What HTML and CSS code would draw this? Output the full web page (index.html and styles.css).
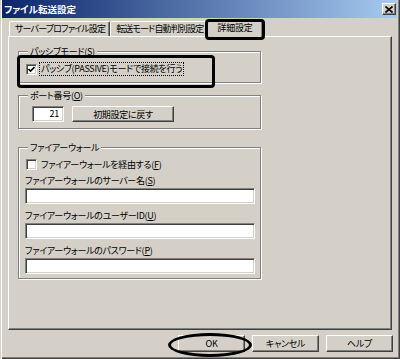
FILE: index.html
```html
<!DOCTYPE html>
<html lang="ja">
<head>
    <meta charset="UTF-8">
    <title>ファイル転送設定</title>
    <link rel="stylesheet" href="styles.css">
</head>
<body>
    <div class="window">
        <div class="titlebar">
            <span class="title">ファイル転送設定</span>
            <span class="close">
                <svg width="8" height="7" viewBox="0 0 8 7"><path d="M0.5 0.5 L7.5 6.5 M7.5 0.5 L0.5 6.5" stroke="#000" stroke-width="1.6"/></svg>
            </span>
        </div>

        <div class="tabs">
            <div class="tab">サーバープロファイル設定</div>
            <div class="tab">転送モード自動判別設定</div>
            <div class="tab active">詳細設定</div>
        </div>

        <div class="panel">
            <fieldset class="group group-passive">
                <legend>パッシブモード(<u>S</u>)</legend>
                <label class="check">
                    <span class="box checked">
                        <svg width="7" height="7" viewBox="0 0 7 7"><path d="M0.5 3 L2.5 5 L6.5 1" fill="none" stroke="#000" stroke-width="1.6"/></svg>
                    </span>
                    <span class="focus">パッシブ(PASSIVE)モードで接続を行う</span>
                </label>
            </fieldset>

            <fieldset class="group group-port">
                <legend>ポート番号(<u>O</u>)</legend>
                <div class="port-row">
                    <div class="input port">21</div>
                    <div class="btn reset">初期設定に戻す</div>
                </div>
            </fieldset>

            <fieldset class="group group-fw">
                <legend>ファイアーウォール</legend>
                <label class="check fw-check">
                    <span class="box"></span>
                    <span>ファイアーウォールを経由する(<u>F</u>)</span>
                </label>
                <div class="field">
                    <div class="field-label">ファイアーウォールのサーバー名(<u>S</u>)</div>
                    <div class="input wide"></div>
                </div>
                <div class="field">
                    <div class="field-label">ファイアーウォールのユーザーID(<u>U</u>)</div>
                    <div class="input wide"></div>
                </div>
                <div class="field">
                    <div class="field-label">ファイアーウォールのパスワード(<u>P</u>)</div>
                    <div class="input wide"></div>
                </div>
            </fieldset>
        </div>

        <div class="footer">
            <div class="btn footer-btn ok">OK</div>
            <div class="btn footer-btn">キャンセル</div>
            <div class="btn footer-btn">ヘルプ</div>
        </div>
    </div>
</body>
</html>
```

FILE: styles.css
```css
* {
    box-sizing: border-box;
}
body {
    margin: 0;
    background: #d4d0c8;
    font-family: "Noto Sans CJK JP", "Noto Sans", sans-serif;
    font-size: 9px;
    letter-spacing: -0.3px;
    color: #000;
    font-feature-settings: "palt";
}
u {
    text-underline-offset: 1px;
}
.window {
    width: 400px;
    height: 359px;
    padding: 0 3px 3px 2px;
    display: flex;
    flex-direction: column;
    background: #d4d0c8;
    box-shadow: inset 1px 0 #d4d0c8, inset 2px 0 #fff, inset -1px -1px #404040, inset -2px -2px #808080;
}
.titlebar {
    height: 18px;
    flex: none;
    display: flex;
    align-items: center;
    justify-content: space-between;
    padding: 0 1px 0 2px;
    background: linear-gradient(to right, #0a246a, #a6caf0);
}
.title {
    color: #fff;
    font-weight: bold;
    font-size: 9.5px;
    letter-spacing: 0;
}
.close {
    width: 14px;
    height: 12px;
    display: flex;
    align-items: center;
    justify-content: center;
    background: #d4d0c8;
    border: 1px solid;
    border-color: #fff #404040 #404040 #fff;
    box-shadow: inset -1px -1px #808080;
}
.tabs {
    height: 17px;
    margin-top: 1px;
    padding-left: 7px;
    display: flex;
    align-items: flex-start;
    flex: none;
}
.tab {
    height: 15px;
    margin-top: 2px;
    padding: 0 4px 0 5px;
    line-height: 14px;
    letter-spacing: -0.85px;
    white-space: nowrap;
    border: 1px solid;
    border-bottom: none;
    border-color: #fff #404040 transparent #fff;
    border-radius: 2px 2px 0 0;
    box-shadow: inset -1px 0 #808080;
    background: #d4d0c8;
}
.tab.active {
    position: relative;
    z-index: 1;
    height: 18px;
    margin: 0 0 0 -2px;
    padding: 0 9px 0 10px;
    line-height: 16px;
    letter-spacing: -0.2px;
}
.tab.active::after {
    content: "";
    position: absolute;
    left: -2px;
    top: -1px;
    right: -3px;
    bottom: -3px;
    border: 3px solid #000;
    border-radius: 4px;
}
.panel {
    flex: 1;
    margin: 0 5px 0 6px;
    padding: 9px 0 0 9px;
    border: 1px solid;
    border-color: #fff #404040 #404040 #fff;
    box-shadow: inset -1px -1px #808080;
}
.group {
    position: relative;
    width: 243px;
    margin: 0;
    padding: 5px 5px 6px 6px;
    border: 1px solid #808080;
    box-shadow: inset 1px 1px #fff, 1px 1px #fff;
    min-width: 0;
}
.group legend {
    padding: 0 2px;
    margin-left: 3px;
    line-height: 11px;
    background: #d4d0c8;
}
.group-port {
    margin-top: 7px;
}
.group-fw {
    margin-top: 13px;
    padding-bottom: 4px;
}
.group-passive::after {
    content: "";
    position: absolute;
    left: -2px;
    top: -2px;
    width: 192px;
    height: 27px;
    border: 3px solid #000;
    border-radius: 4px;
}
.check {
    display: flex;
    align-items: center;
    gap: 2px;
    height: 14px;
    padding-left: 1px;
}
.fw-check {
    height: 13px;
    gap: 4px;
}
.box {
    width: 11px;
    height: 11px;
    display: flex;
    align-items: center;
    justify-content: center;
    background: #fff;
    border: 1px solid;
    border-color: #808080 #fff #fff #808080;
    box-shadow: inset 1px 1px #404040, inset -1px -1px #d4d0c8;
}
.focus {
    padding: 1px 2px;
    outline: 1px dotted #000;
    outline-offset: -1px;
    line-height: 12px;
}
.port-row {
    display: flex;
    gap: 8px;
    padding-left: 7px;
}
.input {
    height: 16px;
    background: #fff;
    border: 1px solid;
    border-color: #808080 #fff #fff #808080;
    box-shadow: inset 1px 1px #404040, inset -1px -1px #d4d0c8;
}
.port {
    width: 32px;
    padding-right: 4px;
    text-align: right;
    line-height: 14px;
}
.btn {
    display: flex;
    align-items: center;
    justify-content: center;
    background: #d4d0c8;
    border: 1px solid;
    border-color: #fff #404040 #404040 #fff;
    box-shadow: inset -1px -1px #808080;
}
.reset {
    width: 102px;
    height: 16px;
}
.fw-check + .field {
    margin-top: 4px;
}
.field + .field {
    margin-top: 6px;
}
.field-label {
    height: 12px;
    line-height: 12px;
    margin-bottom: 1px;
}
.wide {
    width: 230px;
}
.footer {
    height: 26px;
    flex: none;
    display: flex;
    justify-content: flex-end;
    gap: 7px;
    padding: 5px 4px 0 0;
}
.footer-btn {
    width: 67px;
    height: 17px;
}
.ok {
    position: relative;
}
.ok::after {
    content: "";
    position: absolute;
    left: -11px;
    right: -8px;
    top: -3px;
    bottom: -6px;
    border: 3px solid #000;
    border-radius: 50%;
}
```
